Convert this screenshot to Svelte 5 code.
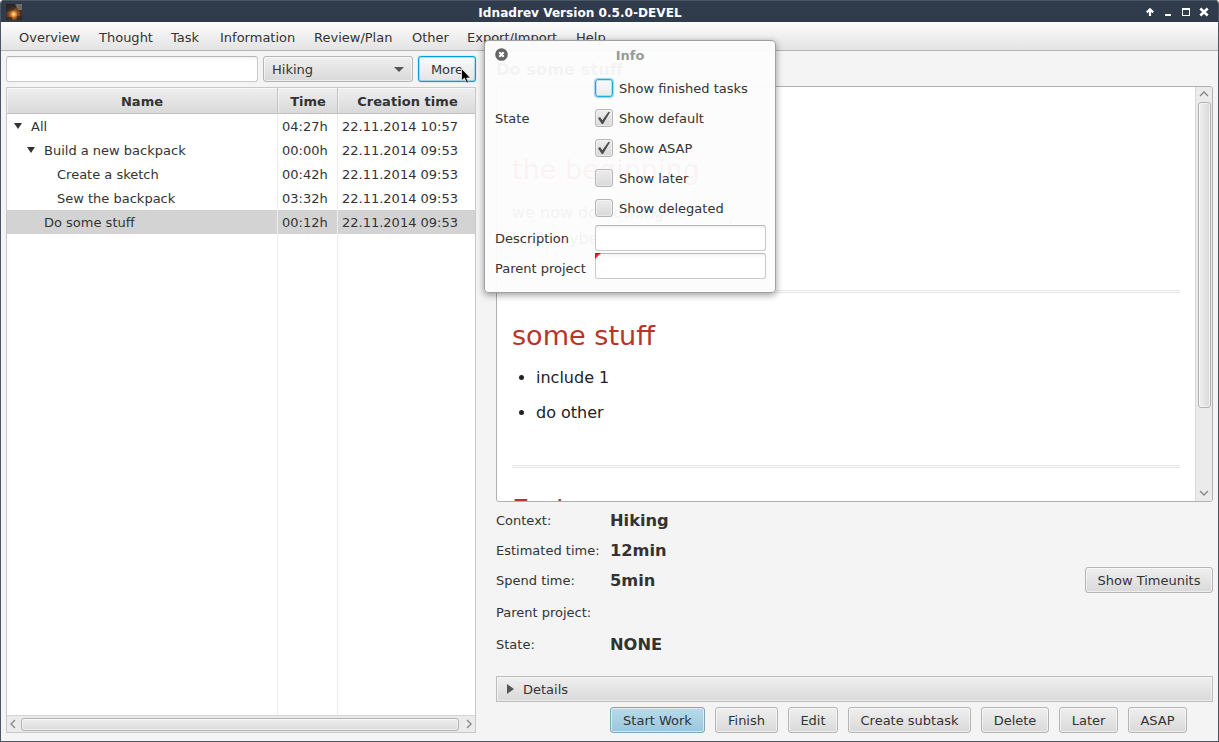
<script>
  const menus = [
    ['Overview', 80], ['Thought', 72], ['Task', 49], ['Information', 94],
    ['Review/Plan', 98], ['Other', 55], ['Export/Import', 109], ['Help', 40]
  ];
  const rows = [
    { name: 'All', time: '04:27h', created: '22.11.2014 10:57', level: 0, open: true },
    { name: 'Build a new backpack', time: '00:00h', created: '22.11.2014 09:53', level: 1, open: true },
    { name: 'Create a sketch', time: '00:42h', created: '22.11.2014 09:53', level: 2 },
    { name: 'Sew the backpack', time: '03:32h', created: '22.11.2014 09:53', level: 2 },
    { name: 'Do some stuff', time: '00:12h', created: '22.11.2014 09:53', level: 1, selected: true }
  ];
  const facts = [
    ['Context:', 'Hiking', 30], ['Estimated time:', '12min', 30], ['Spend time:', '5min', 30],
    ['Parent project:', '', 34], ['State:', 'NONE', 30]
  ];
  const actions = [
    ['Start Work', 95], ['Finish', 63], ['Edit', 50], ['Create subtask', 123],
    ['Delete', 68], ['Later', 59], ['ASAP', 59]
  ];
  const states = [
    ['Show finished tasks', false], ['Show default', true], ['Show ASAP', true],
    ['Show later', false], ['Show delegated', false]
  ];
</script>

<div class="window">
  <header class="titlebar">
    <svg class="appicon" width="16" height="16" viewBox="0 0 16 16">
      <defs>
        <radialGradient id="glow" cx="48%" cy="64%" r="60%">
          <stop offset="0" stop-color="#fff6c8" /><stop offset=".16" stop-color="#f6b04a" />
          <stop offset=".4" stop-color="#a65a24" /><stop offset=".75" stop-color="#4d3428" /><stop offset="1" stop-color="#2d2624" />
        </radialGradient>
      </defs>
      <rect width="16" height="16" fill="url(#glow)" />
      <path d="M9 0h7v6h-3l-2-2z" fill="#a6a29a" opacity=".55" />
      <path d="M0 0h9l1 3-2 3-3 1-5 1zM0 13h6v3H0zM11 12h5v4h-6z" fill="#2a2422" opacity=".6" />
    </svg>
    <span class="caption">Idnadrev Version 0.5.0-DEVEL</span>
    <svg class="controls" width="66" height="16" viewBox="0 0 66 16" fill="none" stroke="#fff" stroke-width="2">
      <path d="M4 11V5M.8 7.4L4 4.2l3.2 3.2" stroke-width="2.2" />
      <path d="M19 10h6" />
      <path d="M36 3h8v8h-8zM37 5v5h6V5z" fill="#fff" fill-rule="evenodd" stroke="none" />
      <path d="M54.3 3.5l7.4 7M61.7 3.5l-7.4 7" stroke-width="2.5" />
    </svg>
  </header>

  <nav class="menubar">
    {#each menus as [label, w]}<span style="width:{w}px">{label}</span>{/each}
  </nav>

  <main>
    <section class="left">
      <div class="filter">
        <div class="field search"></div>
        <div class="btn combo"><span>Hiking</span><i class="down"></i></div>
        <div class="btn focused">More</div>
      </div>
      <div class="table">
        <div class="thead"><b>Name</b><b>Time</b><b>Creation time</b></div>
        <div class="tbody">
          {#each rows as r}
            <div class="row" class:selected={r.selected}>
              <span class="name" style="padding-left:{7 + r.level * 13}px">
                <i class="arrow" class:open={r.open}></i>{r.name}
              </span>
              <span>{r.time}</span><span>{r.created}</span>
            </div>
          {/each}
          <div class="row filler"><span></span><span></span><span></span></div>
        </div>
        <div class="hbar">
          <svg width="14" height="16" viewBox="0 0 14 16"><path d="M8 4L4 8l4 4" /></svg>
          <div class="thumb"></div>
          <svg width="16" height="16" viewBox="0 0 16 16"><path d="M8 4l4 4-4 4" /></svg>
        </div>
      </div>
    </section>

    <section class="right">
      <h2>Do some stuff</h2>
      <div class="viewer">
        <article>
          <h1 class="first">the beginning</h1>
          <p>we now do nothing<br />but maybe later</p>
          <hr />
          <h1>some stuff</h1>
          <ul><li>include 1</li><li>do other</li></ul>
          <hr />
          <h1 class="last">End</h1>
        </article>
        <div class="vbar">
          <svg width="16" height="15" viewBox="0 0 16 15"><path d="M4 9l4-4 4 4" /></svg>
          <div class="thumb"></div>
          <svg class="bottom" width="16" height="15" viewBox="0 0 16 15"><path d="M4 5l4 4 4-4" /></svg>
        </div>
      </div>
      <div class="facts">
        <dl>
          {#each facts as [k, v, h]}
            <div class="fact" style="height:{h}px"><dt>{k}</dt><dd>{v}</dd></div>
          {/each}
        </dl>
        <div class="btn units">Show Timeunits</div>
      </div>
      <div class="details"><i></i><span>Details</span></div>
      <div class="actions">
        {#each actions as [label, w], i}<div class="btn" class:primary={i === 0} style="width:{w}px">{label}</div>{/each}
      </div>
    </section>
  </main>

  <aside class="popup">
    <div class="pophead">
      <svg width="13" height="13" viewBox="0 0 13 13"><circle cx="6.5" cy="6.5" r="6.3" fill="#656565" /><path d="M4.3 4.3l4.4 4.4M8.7 4.3L4.3 8.7" stroke="#fff" stroke-width="2.1" /></svg>
      <b>Info</b>
    </div>
    <div class="popbody">
      <span class="state">State</span>
      <div class="checks">
        {#each states as [label, on], i}
          <div class="check">
            <span class="box" class:hot={i === 0}>
              {#if on}<svg width="16" height="16" viewBox="0 0 16 16"><path d="M2 8.3l2-1.2 2.3 3.2 6.2-8.6L14 2.3 7 14H5.8z" fill="#4c4c4c" /></svg>{/if}
            </span><span class="label">{label}</span>
          </div>
        {/each}
      </div>
    </div>
    <div class="formrow"><span>Description</span><div class="field"></div></div>
    <div class="formrow second"><span>Parent project</span><div class="field required"></div></div>
  </aside>

  <svg class="cursor" width="12" height="19" viewBox="0 0 12 19">
    <path d="M.5 .5v12.2l2.9-2.6 2.1 4.6h2.2l-2.1-4.7h3.9z" fill="#000" stroke="#fff" stroke-width=".7" />
  </svg>
</div>

<style>
  :global(body) { margin: 0; background: #fff; }
  .window, .window * { box-sizing: border-box; }
  .window {
    position: relative; width: 1219px; height: 742px; overflow: hidden;
    display: flex; flex-direction: column;
    border: 1px solid #4d5564; border-top: 0; border-radius: 4px 4px 0 0;
    background: #f4f4f4; color: #333;
    font: 13px/16px "DejaVu Sans", sans-serif; white-space: nowrap;
  }
  .titlebar {
    height: 22px; flex: none; display: flex; align-items: center; padding: 0 6px 0 5px;
    background: #303b4b; border-top: 1px solid #4d5867; color: #fff;
  }
  .caption { flex: 1; text-align: center; font-weight: bold; font-size: 12.1px; padding: 3px 8px 0 0; }
  .controls { margin-top: 3px; }
  .menubar {
    height: 29px; flex: none; display: flex; align-items: center; padding: 3px 0 0 18px;
    background: linear-gradient(#fdfdfd, #e3e3e3); border-bottom: 1px solid #b5b5b5;
  }
  main { flex: 1; display: flex; padding: 5px 5px 8px; gap: 20px; min-height: 0; }
  .left { width: 470px; display: flex; flex-direction: column; gap: 5px; }
  .right { flex: 1; display: flex; flex-direction: column; min-width: 0; }
  .filter { display: flex; gap: 5px; height: 26px; }
  .field {
    height: 26px; background: linear-gradient(#f3f3f3, #fff 4px); border: 1px solid #c8c8c8;
    border-top-color: #b5b5b5; border-radius: 3px;
  }
  .search { width: 252px; }
  .btn {
    height: 26px; display: flex; align-items: center; justify-content: center; flex: none; padding-top: 2px;
    border: 1px solid #b5b5b5; border-radius: 3px;
    background: linear-gradient(#efefef, #d9d9d9);
    box-shadow: inset 0 0 0 1px rgba(255, 255, 255, .55);
  }
  .combo { width: 150px; justify-content: space-between; padding: 2px 8px 0; }
  .down { margin-top: -2px; border: 5px solid transparent; border-top-color: #555; border-bottom: 0; }
  .focused {
    width: 58px; border-color: #039ed3; background: linear-gradient(#fafafa, #e4e4e4);
    box-shadow: inset 0 0 0 1px rgba(3, 158, 211, .3), 0 0 1px #039ed3;
  }
  .table { flex: 1; display: flex; flex-direction: column; border: 1px solid #c8c8c8; background: #fff; }
  .thead, .row { display: grid; grid-template: 100% / 271px 60px 1fr; }
  .thead { height: 26px; flex: none; }
  .thead b {
    display: flex; align-items: center; justify-content: center; padding: 2px 0 0 1px;
    background: linear-gradient(#efefef, #d9d9d9); border-right: 1px solid #c3c3c3; border-bottom: 1px solid #c3c3c3;
    box-shadow: inset 1px 1px 0 rgba(255, 255, 255, .5);
  }
  .thead b:first-child { padding-left: 0; }
  .thead b:last-child { border-right: 0; padding-left: 2px; letter-spacing: .05px; }
  .tbody { flex: 1; display: flex; flex-direction: column; }
  .row { height: 24px; line-height: 26px; flex: none; }
  .row span { border-right: 1px solid #ededed; padding-left: 4px; }
  .row span:last-child { border-right: 0; }
  .row.selected { background: #d3d3d3; }
  .row .name { display: flex; align-items: center; line-height: 16px; padding-top: 2px; }
  .row.filler { flex: 1; }
  .arrow { width: 10px; margin-right: 7px; }
  .arrow.open { width: 0; margin: -2px 9px 0 0; border: 4.5px solid transparent; border-top: 6px solid #333; border-bottom: 0; }
  .hbar { height: 17px; flex: none; display: flex; align-items: center; border-top: 1px solid #d5d5d5; background: #ebebeb; }
  .hbar svg, .vbar svg { flex: none; fill: none; stroke: #888; stroke-width: 1.4; }
  .thumb { border: 1px solid #b0b0b0; border-radius: 3px; box-shadow: inset 0 0 0 1px rgba(255, 255, 255, .6); }
  .hbar .thumb { flex: 1; height: 13px; background: linear-gradient(#efefef, #dadada); }
  h2 { margin: 0; height: 30px; font-size: 16.25px; line-height: 27px; }
  .viewer {
    height: 416px; flex: none; display: flex; overflow: hidden;
    border: 1px solid #b0b0b0; border-radius: 3px; background: #fff;
  }
  article { flex: 1; padding: 0 15px; overflow: hidden; font-size: 16px; line-height: 26px; color: #222; }
  h1 { margin: 0; font-weight: normal; font-size: 27.1px; line-height: 36px; color: #b8352b; }
  .first { padding-top: 65px; }
  article p { margin: 12px 0 0; }
  hr { height: 3px; margin: 38px 0 0; border: 1px solid #e5e5e5; border-width: 1px 0; }
  hr + h1 { margin-top: 25px; }
  hr + .last { margin-top: 24px; }
  ul { margin: 11px 0 0; padding-left: 24px; line-height: 25px; }
  li + li { margin-top: 10px; }
  ul + hr { margin-top: 40px; }
  .vbar { width: 17px; display: flex; flex-direction: column; align-items: center; background: #ebebeb; border-left: 1px solid #d9d9d9; }
  .vbar .thumb { width: 13px; height: 306px; background: linear-gradient(90deg, #efefef, #dadada); }
  .bottom { margin-top: auto; }
  .facts { display: flex; height: 174px; padding-top: 4px; justify-content: space-between; }
  dl { margin: 0; }
  .fact { display: flex; align-items: center; }
  dt { width: 114px; }
  dd { margin: 0; font-size: 16.25px; font-weight: bold; }
  .units { width: 128px; margin-top: 61px; }
  .details {
    height: 26px; flex: none; display: flex; align-items: center; padding-left: 10px; gap: 9px;
    border: 1px solid #bdbdbd; background: linear-gradient(#efefef, #d9d9d9); box-shadow: inset 0 0 0 1px rgba(255, 255, 255, .45);
  }
  .details i { border: 5px solid transparent; border-left: 7px solid #555; border-right: 0; }
  .details span { padding-top: 2px; }
  .actions { display: flex; gap: 10px; margin: 5px 0 0 114px; }
  .primary { border-color: #7fa6ba; background: linear-gradient(#b6dcec, #9cc6dc); }
  .popup {
    position: absolute; left: 483px; top: 40px; width: 292px; height: 253px; padding: 0 9px 0 10px;
    border: 1px solid #a0a0a0; border-radius: 4px; background: rgba(252, 252, 252, .955);
    box-shadow: 0 2px 7px rgba(0, 0, 0, .4);
  }
  .pophead { display: flex; align-items: center; height: 27px; }
  .pophead b { flex: 1; text-align: center; color: #999; padding: 2px 14px 0 0; }
  .popbody { display: flex; padding-top: 5px; }
  .state { width: 100px; line-height: 92px; height: 90px; }
  .checks { flex: 1; }
  .check { display: flex; align-items: center; gap: 6px; height: 30px; }
  .label { padding-top: 2px; }
  .box {
    width: 18px; height: 18px; border: 1px solid #b5b5b5; border-radius: 3px;
    background: linear-gradient(#ececec, #d9d9d9); box-shadow: inset 0 0 0 1px rgba(255, 255, 255, .4);
  }
  .box svg { display: block; }
  .box.hot { border-color: #27a9d8; background: linear-gradient(#fafafa, #eaeaea); box-shadow: 0 0 1px 1px rgba(3, 158, 211, .4), inset 0 0 0 1px rgba(3, 158, 211, .25); }
  .formrow { display: flex; height: 28px; margin-top: 2px; }
  .formrow span { width: 100px; line-height: 28px; }
  .formrow .field { width: 171px; }
  .second { margin-top: 0; }
  .second span { line-height: 32px; }
  .required {
    background: linear-gradient(135deg, #f2222f 4px, transparent 4.5px) border-box,
      linear-gradient(#f3f3f3, #fff 4px);
    border-top-left-radius: 0; border-left-color: rgba(0, 0, 0, .2); border-top-color: rgba(0, 0, 0, .28);
  }
  .cursor { position: absolute; left: 460px; top: 68px; }
</style>
